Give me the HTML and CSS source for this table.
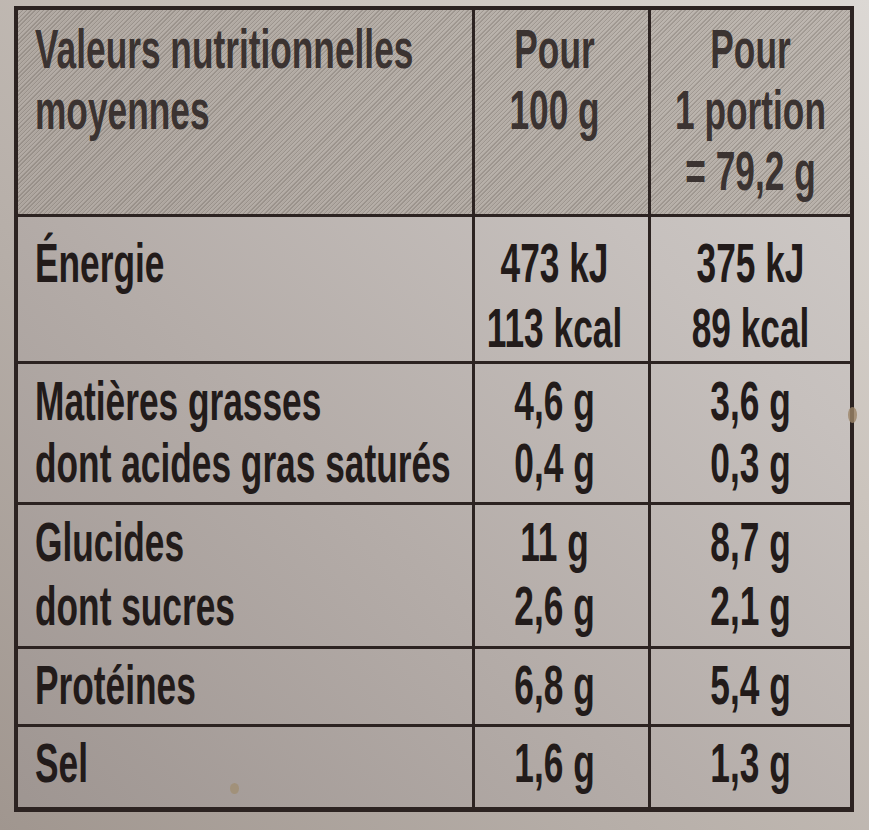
FILE: index.html
```html
<!DOCTYPE html>
<html lang="fr">
<head>
<meta charset="utf-8">
<title>Valeurs nutritionnelles</title>
<link rel="stylesheet" href="styles.css">
</head>
<body>
<div class="label">
  <div class="cell head name"><div class="txt">Valeurs nutritionnelles<br>moyennes</div></div>
  <div class="cell head num c2"><div class="txt">Pour<br>100 g</div></div>
  <div class="cell head num c3"><div class="txt">Pour<br>1 portion<br>= 79,2 g</div></div>

  <div class="cell name energy"><div class="txt">Énergie</div></div>
  <div class="cell num c2 energy"><div class="txt">473 kJ<br>113 kcal</div></div>
  <div class="cell num c3 energy"><div class="txt">375 kJ<br>89 kcal</div></div>

  <div class="cell name"><div class="txt">Matières grasses<br>dont acides gras saturés</div></div>
  <div class="cell num c2"><div class="txt">4,6 g<br>0,4 g</div></div>
  <div class="cell num c3"><div class="txt">3,6 g<br>0,3 g</div></div>

  <div class="cell name tight"><div class="txt">Glucides<br>dont sucres</div></div>
  <div class="cell num c2 tight"><div class="txt">11 g<br>2,6 g</div></div>
  <div class="cell num c3 tight"><div class="txt">8,7 g<br>2,1 g</div></div>

  <div class="cell name low"><div class="txt">Protéines</div></div>
  <div class="cell num c2 low"><div class="txt">6,8 g</div></div>
  <div class="cell num c3 low"><div class="txt">5,4 g</div></div>

  <div class="cell name low stained"><div class="txt">Sel</div></div>
  <div class="cell num c2 low"><div class="txt">1,6 g</div></div>
  <div class="cell num c3 low"><div class="txt">1,3 g</div></div>
</div>
</body>
</html>
```
FILE: styles.css
```css
html, body {
  margin: 0;
  padding: 0;
}
body {
  width: 869px;
  height: 830px;
  overflow: hidden;
  background: linear-gradient(to bottom left, #dcd8d4 0%, #cbc4bd 30%, #b6aea8 65%, #a0968f 100%);
  font-family: "Liberation Sans", Arial, sans-serif;
}
.label {
  position: relative;
  display: grid;
  grid-template-columns: 454px 173px 199px;
  grid-template-rows: 204px 144px 138px 141px 75px 80px;
  gap: 3px;
  padding: 4px 4px 5px 4px;
  width: max-content;
  margin: 6px 0 0 14px;
  background: #2c2321;
}
.label::after {
  content: "";
  position: absolute;
  right: -3px;
  top: 401px;
  width: 9px;
  height: 16px;
  border-radius: 50%;
  background: #9c8468;
  opacity: 0.8;
}
.cell {
  background: linear-gradient(to bottom left, #d3cfcc 0%, #c6c0bd 28%, #b4aca8 60%, #9d9490 100%) fixed;
  color: #221b1a;
  font-weight: 700;
  font-size: 56px;
  line-height: 62px;
  white-space: nowrap;
  overflow: hidden;
  padding: 6px 0 0 17px;
}
.txt {
  transform: scaleX(0.63);
  transform-origin: 0 0;
}
.num {
  text-align: center;
  padding-left: 0;
}
.num .txt {
  margin: 0 -80px;
  transform-origin: 50% 0;
}
.c2 {
  padding-right: 14px;
}
.head {
  background:
    repeating-linear-gradient(135deg, rgba(80, 72, 66, 0.22) 0 1px, rgba(255, 255, 255, 0.07) 1px 2px, transparent 2px 3px),
    linear-gradient(to bottom left, #bab3ac 0%, #ada59e 55%, #a59d96 100%) fixed;
  color: #3b3331;
  padding-top: 8px;
  line-height: 61px;
}
.energy {
  padding-top: 13px;
  line-height: 65px;
}
.tight {
  line-height: 64px;
  padding-top: 5px;
}
.low {
  padding-top: 5px;
}
.stained {
  position: relative;
}
.stained::after {
  content: "";
  position: absolute;
  left: 212px;
  top: 56px;
  width: 9px;
  height: 11px;
  border-radius: 50%;
  background: #a08c6c;
  opacity: 0.7;
}
```
